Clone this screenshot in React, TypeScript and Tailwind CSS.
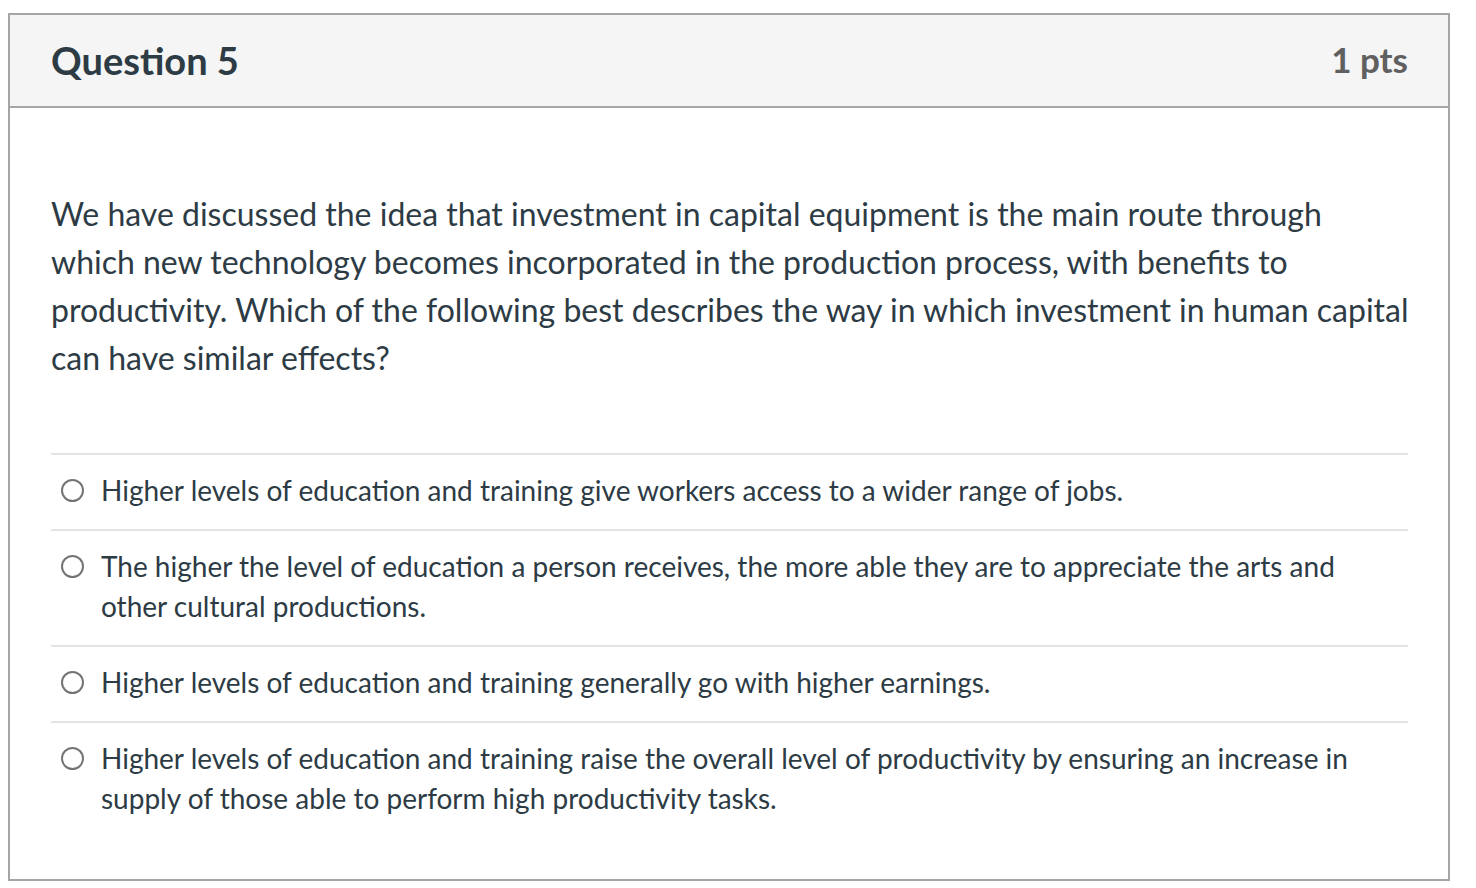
import React from "react";

const answers = [
  "Higher levels of education and training give workers access to a wider range of jobs.",
  "The higher the level of education a person receives, the more able they are to appreciate the arts and other cultural productions.",
  "Higher levels of education and training generally go with higher earnings.",
  "Higher levels of education and training raise the overall level of productivity by ensuring an increase in supply of those able to perform high productivity tasks.",
];

export default function App() {
  return (
    <div
      className="w-[1476px] h-[888px] bg-white pt-[13px] pl-[8px]"
      style={{ fontFamily: "Lato, 'Noto Sans', sans-serif" }}
    >
      <div className="w-[1442px] h-[868px] border-2 border-[#a5a5a5] flex flex-col">
        <div className="h-[93px] bg-[#f5f5f5] border-b-2 border-[#a5a5a5] flex items-center justify-between pl-[41px] pr-[40px] pb-[2px]">
          <h2 className="text-[38px] font-bold text-[#2d3b45] leading-none">Question 5</h2>
          <div className="text-[35px] font-bold text-[#606060] leading-none">1 pts</div>
        </div>
        <div className="flex-1 pt-[82px] pl-[41px] pr-[30px]">
          <p className="text-[32px] leading-[48px] text-[#2d3b45] whitespace-nowrap">
            We have discussed the idea that investment in capital equipment is the main route through
            <br />
            which new technology becomes incorporated in the production process, with benefits to
            <br />
            productivity. Which of the following best describes the way in which investment in human capital
            <br />
            can have similar effects?
          </p>
          <div className="mt-[71px] mr-[10px]">
            {answers.map((a, i) => (
              <div
                key={i}
                className="border-t-2 border-[#e4e4e4] flex items-start pt-[15px] pb-[19px]"
              >
                <div className="w-[50px] h-[40px] flex items-center pl-[10px] shrink-0">
                  <span className="block w-[23px] h-[23px] rounded-full border-2 border-[#747474]" />
                </div>
                <div className="text-[28px] leading-[40px] text-[#2d3b45] pr-[40px]">{a}</div>
              </div>
            ))}
          </div>
        </div>
      </div>
    </div>
  );
}
